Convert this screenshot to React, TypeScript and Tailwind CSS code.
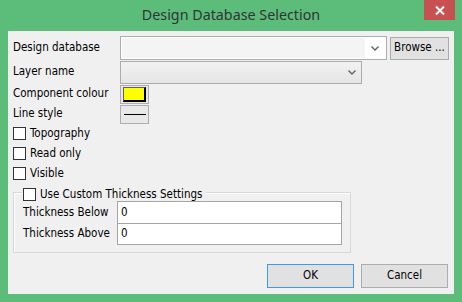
import React from "react";

const Chevron = () => (
  <svg width="8" height="5" viewBox="0 0 8 5" className="block">
    <path d="M0.5 0.5 L4 4 L7.5 0.5" fill="none" stroke="#606060" strokeWidth="1.4" />
  </svg>
);

const Check = ({ label, className = "" }: { label: string; className?: string }) => (
  <div className={`flex items-center h-[13px] ${className}`}>
    <div className="w-[13px] h-[13px] border border-[#333333] bg-white shrink-0" />
    <span className="ml-[4px] leading-none">{label}</span>
  </div>
);

export default function App() {
  return (
    <div
      className="w-[462px] h-[302px] bg-[#5cbd7b] flex flex-col text-[11.5px] text-black font-['DejaVu_Sans_Condensed','DejaVu_Sans',sans-serif]"
    >
      <div className="relative h-[31px] shrink-0 flex items-center justify-center">
        <span className="font-['Noto_Sans',sans-serif] text-[14.3px] text-[#333333] leading-none mt-[-1px]">
          Design Database Selection
        </span>
        <div className="absolute top-0 right-[7px] w-[31px] h-[20px] bg-[#c75050] flex items-center justify-center">
          <svg width="10" height="9" viewBox="0 0 10 9">
            <path d="M1 0.5 L9 8.5 M9 0.5 L1 8.5" stroke="white" strokeWidth="2" />
          </svg>
        </div>
      </div>
      <div className="mx-[8px] h-[263px] bg-[#f0f0f0] flex flex-col pl-[5px] pt-[5px]">
        {/* Row 1 */}
        <div className="flex items-center h-[24px]">
          <div className="w-[107px]">Design database</div>
          <div className="w-[267px] h-[24px] border border-[#acacac] bg-white flex items-center p-[1px]">
            <div className="flex-1 h-full bg-[#f4f4f4]" />
            <div className="w-[20px] flex justify-center">
              <Chevron />
            </div>
          </div>
          <div className="ml-[3px] w-[59px] h-[23px] border border-[#acacac] bg-[#e1e1e1] flex items-center justify-center">
            Browse ...
          </div>
        </div>
        {/* Row 2 */}
        <div className="flex items-center h-[22px] mt-[1px]">
          <div className="w-[107px]">Layer name</div>
          <div className="w-[242px] h-[23px] border border-[#acacac] bg-gradient-to-b from-[#f2f2f2] to-[#e5e5e5] flex items-center justify-end pr-[5px]">
            <Chevron />
          </div>
        </div>
        {/* Row 3 */}
        <div className="flex items-center h-[18px] mt-[2px]">
          <div className="w-[107px]">Component colour</div>
          <div className="w-[29px] h-[19px] border border-[#adadad] bg-[#e8e8e8] flex items-center justify-center">
            <div className="w-[23px] h-[15px] bg-[#ffff00] border border-[#606060] border-r-[#000] border-b-[#000] border-r-2 border-b-2" />
          </div>
        </div>
        {/* Row 4 */}
        <div className="flex items-center h-[18px] mt-[2px]">
          <div className="w-[107px]">Line style</div>
          <div className="w-[29px] h-[19px] border border-[#adadad] bg-[#e8e8e8] flex items-center justify-center">
            <div className="w-[22px] h-[1px] bg-black" />
          </div>
        </div>
        {/* Checkboxes */}
        <div className="flex flex-col gap-[7px] mt-[4px]">
          <Check label="Topography" />
          <Check label="Read only" />
          <Check label="Visible" />
        </div>
        {/* Group */}
        <div className="relative mt-[12px] w-[338px] h-[61px] border border-[#d8d8d8] shadow-[inset_1px_1px_0_#ffffff]">
          <div className="absolute left-[8px] top-[-5px] bg-[#f0f0f0] pr-[4px] pl-[1px]">
            <Check label="Use Custom Thickness Settings" />
          </div>
          <div className="flex flex-col pl-[9px] pt-[8px]">
            <div className="flex items-center h-[23px]">
              <div className="w-[94px]">Thickness Below</div>
              <div className="w-[225px] h-[23px] border border-[#a5a5a5] bg-white flex items-center pl-[3px]">0</div>
            </div>
            <div className="flex items-center h-[22px] mt-[-1px]">
              <div className="w-[94px]">Thickness Above</div>
              <div className="w-[225px] h-[22px] border border-[#a5a5a5] bg-white flex items-center pl-[3px]">0</div>
            </div>
          </div>
        </div>
        {/* Buttons */}
        <div className="flex justify-end gap-[7px] pr-[6px] mt-[11px]">
          <div className="w-[87px] h-[24px] border border-[#3c9bf0] bg-[#e1e1e1] flex items-center justify-center">OK</div>
          <div className="w-[87px] h-[24px] border border-[#adadad] bg-[#e1e1e1] flex items-center justify-center">Cancel</div>
        </div>
      </div>
    </div>
  );
}
